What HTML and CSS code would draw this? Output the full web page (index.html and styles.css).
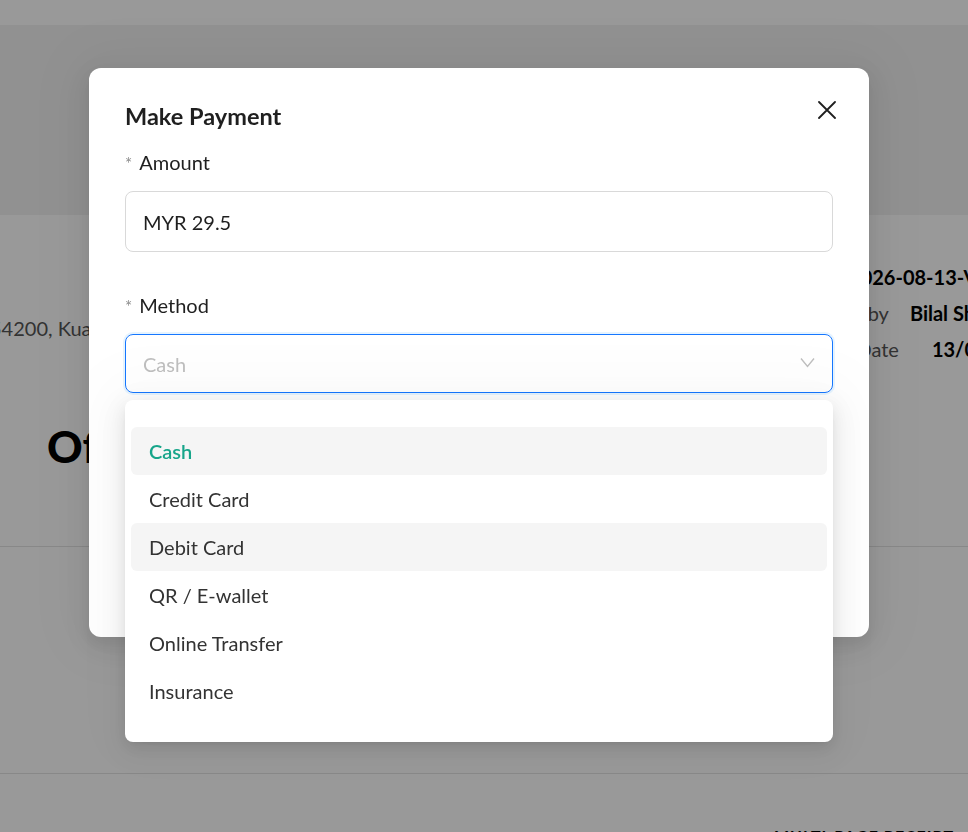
FILE: index.html
```html
<!DOCTYPE html>
<html lang="en">
<head>
    <meta charset="UTF-8">
    <meta name="viewport" content="width=device-width, initial-scale=1.0">
    <title>Make Payment</title>
    <link rel="stylesheet" href="styles.css">
</head>
<body>
    <div class="page">
        <header class="topbar"></header>
        <section class="hero"></section>

        <section class="details">
            <div class="address">54200, Kuala Lumpur, Malaysia</div>
            <div class="meta">
                <div class="meta-row"><strong>INV-2026-08-13-V01</strong></div>
                <div class="meta-row"><span>Issued by</span><strong class="by-value">Bilal Shah</strong></div>
                <div class="meta-row"><span>Issue Date</span><strong class="date-value">13/08/2026</strong></div>
            </div>
        </section>

        <h2 class="doc-title">Official Receipt</h2>
        <div class="rule"></div>
        <div class="items"></div>
        <div class="rule"></div>
        <div class="footer-note">MULTI-PAGE RECEIPT</div>
    </div>

    <div class="overlay"></div>

    <div class="modal">
        <button class="close-btn" type="button" aria-label="Close">
            <svg width="18" height="18" viewBox="0 0 18 18">
                <path d="M1 1 L17 17 M17 1 L1 17" stroke="#1f1f1f" stroke-width="1.8" stroke-linecap="round" fill="none"/>
            </svg>
        </button>

        <h1 class="modal-title">Make Payment</h1>

        <div class="field">
            <label class="field-label"><span class="req">*</span>Amount</label>
            <div class="text-input">MYR 29.5</div>
        </div>

        <div class="field">
            <label class="field-label"><span class="req">*</span>Method</label>
            <div class="select-wrap">
                <div class="select">
                    <span class="placeholder">Cash</span>
                    <svg class="chevron" width="15" height="11" viewBox="0 0 15 11">
                        <polyline points="1,1.5 7.5,9.5 14,1.5" stroke="#bfbfbf" stroke-width="1.4" fill="none"/>
                    </svg>
                </div>
                <ul class="dropdown">
                    <li class="option selected">Cash</li>
                    <li class="option">Credit Card</li>
                    <li class="option hovered">Debit Card</li>
                    <li class="option">QR / E-wallet</li>
                    <li class="option">Online Transfer</li>
                    <li class="option">Insurance</li>
                </ul>
            </div>
        </div>
    </div>
</body>
</html>
```

FILE: styles.css
```css
body {
    margin: 0;
    padding: 0;
    overflow: hidden;
    font-family: Lato, "Open Sans", sans-serif;
    background-color: #fff;
}

.page {
    width: 968px;
    height: 832px;
    overflow: hidden;
}

.topbar {
    height: 25px;
    background-color: #fff;
}

.hero {
    height: 190px;
    background-color: #f2f2f2;
}

.details {
    display: flex;
    justify-content: space-between;
    align-items: flex-start;
}

.address {
    margin-top: 98px;
    margin-left: -10px;
    font-size: 20px;
    line-height: 30px;
    color: #555;
    white-space: nowrap;
}

.meta {
    width: 300px;
    margin-right: -139px;
    padding-top: 44px;
}

.meta-row {
    font-size: 20px;
    line-height: 36px;
    color: #555;
    white-space: nowrap;
}

.meta-row strong {
    color: #000;
    font-weight: 700;
}

.by-value {
    margin-left: 21px;
}

.date-value {
    margin-left: 33px;
}

.doc-title {
    margin: 51px 0 0 47px;
    font-size: 44px;
    line-height: 56px;
    font-weight: 900;
    color: #000;
}

.rule {
    height: 1px;
    background-color: #e3e3e3;
}

.doc-title + .rule {
    margin-top: 72px;
}

.items {
    height: 226px;
}

.footer-note {
    margin: 52px 0 0 774px;
    font-size: 16px;
    font-weight: 700;
    letter-spacing: 1px;
    color: #000;
    white-space: nowrap;
}

.overlay {
    position: fixed;
    inset: 0;
    background-color: rgba(0, 0, 0, 0.4);
}

.modal {
    position: fixed;
    top: 68px;
    left: 89px;
    width: 780px;
    height: 569px;
    box-sizing: border-box;
    padding: 32px 36px;
    background-color: #fff;
    border-radius: 12px;
    box-shadow: 0 6px 16px rgba(0, 0, 0, 0.08), 0 9px 28px 8px rgba(0, 0, 0, 0.05), 0 0 60px 30px rgba(0, 0, 0, 0.03);
}

.close-btn {
    position: absolute;
    top: 33px;
    right: 33px;
    padding: 0;
    border: none;
    background: none;
    line-height: 0;
    cursor: pointer;
}

.modal-title {
    margin: 0 0 15px;
    font-size: 23.5px;
    line-height: 32px;
    font-weight: 700;
    color: #1f1f1f;
}

.field-label {
    display: block;
    margin-bottom: 12px;
    font-size: 20px;
    line-height: 30px;
    color: #1f1f1f;
}

.req {
    margin-right: 7px;
    font-size: 17px;
    color: #8c8c8c;
}

.field + .field {
    margin-top: 38px;
}

.text-input {
    display: flex;
    align-items: center;
    height: 61px;
    box-sizing: border-box;
    padding: 0 17px;
    border: 1px solid #d9d9d9;
    border-radius: 8px;
    font-size: 20px;
    color: #1f1f1f;
}

.select-wrap {
    position: relative;
}

.select {
    display: flex;
    align-items: center;
    justify-content: space-between;
    height: 59px;
    box-sizing: border-box;
    padding: 0 17px;
    border: 1px solid #1677ff;
    border-radius: 8px;
    box-shadow: 0 0 0 2px rgba(5, 145, 255, 0.1);
}

.placeholder {
    font-size: 20px;
    color: #bfbfbf;
}

.chevron {
    margin-top: -2px;
}

.dropdown {
    position: absolute;
    top: 66px;
    left: 0;
    right: 0;
    margin: 0;
    padding: 27px 6px 27px;
    list-style: none;
    background-color: #fff;
    border-radius: 8px;
    box-shadow: 0 6px 16px rgba(0, 0, 0, 0.08), 0 3px 6px -4px rgba(0, 0, 0, 0.12), 0 9px 28px 8px rgba(0, 0, 0, 0.05), 0 0 60px 30px rgba(0, 0, 0, 0.02);
    z-index: 2;
}

.option {
    display: flex;
    align-items: center;
    height: 48px;
    padding: 0 18px;
    border-radius: 6px;
    font-size: 20px;
    color: #333;
}

.option.selected {
    background-color: #f5f5f5;
    color: #17a58a;
    font-weight: 600;
}

.option.hovered {
    background-color: #f5f5f5;
}
```
